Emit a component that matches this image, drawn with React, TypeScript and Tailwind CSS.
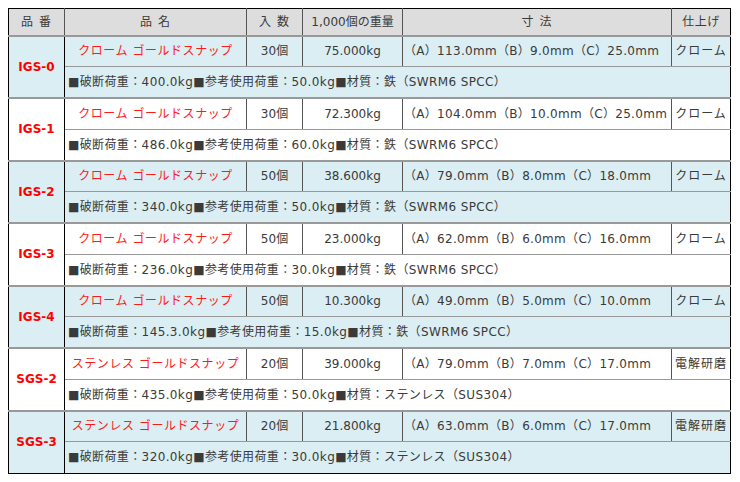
import React from "react";

type Row = {
  code: string;
  name: string;
  qty: string;
  weight: string;
  dim: string;
  fin: string;
  spec: string;
  blue: boolean;
};

const rows: Row[] = [
  { code: "IGS-0", name: "クローム ゴールドスナップ", qty: "30個", weight: "75.000kg", dim: "（A）113.0mm（B）9.0mm（C）25.0mm", fin: "クローム", spec: "■破断荷重：400.0kg■参考使用荷重：50.0kg■材質：鉄（SWRM6 SPCC）", blue: true },
  { code: "IGS-1", name: "クローム ゴールドスナップ", qty: "30個", weight: "72.300kg", dim: "（A）104.0mm（B）10.0mm（C）25.0mm", fin: "クローム", spec: "■破断荷重：486.0kg■参考使用荷重：60.0kg■材質：鉄（SWRM6 SPCC）", blue: false },
  { code: "IGS-2", name: "クローム ゴールドスナップ", qty: "50個", weight: "38.600kg", dim: "（A）79.0mm（B）8.0mm（C）18.0mm", fin: "クローム", spec: "■破断荷重：340.0kg■参考使用荷重：50.0kg■材質：鉄（SWRM6 SPCC）", blue: true },
  { code: "IGS-3", name: "クローム ゴールドスナップ", qty: "50個", weight: "23.000kg", dim: "（A）62.0mm（B）6.0mm（C）16.0mm", fin: "クローム", spec: "■破断荷重：236.0kg■参考使用荷重：30.0kg■材質：鉄（SWRM6 SPCC）", blue: false },
  { code: "IGS-4", name: "クローム ゴールドスナップ", qty: "50個", weight: "10.300kg", dim: "（A）49.0mm（B）5.0mm（C）10.0mm", fin: "クローム", spec: "■破断荷重：145.3.0kg■参考使用荷重：15.0kg■材質：鉄（SWRM6 SPCC）", blue: true },
  { code: "SGS-2", name: "ステンレス ゴールドスナップ", qty: "20個", weight: "39.000kg", dim: "（A）79.0mm（B）7.0mm（C）17.0mm", fin: "電解研磨", spec: "■破断荷重：435.0kg■参考使用荷重：50.0kg■材質：ステンレス（SUS304）", blue: false },
  { code: "SGS-3", name: "ステンレス ゴールドスナップ", qty: "20個", weight: "21.800kg", dim: "（A）63.0mm（B）6.0mm（C）17.0mm", fin: "電解研磨", spec: "■破断荷重：320.0kg■参考使用荷重：30.0kg■材質：ステンレス（SUS304）", blue: true },
];

export default function App() {
  return (
    <div
      className="bg-white w-[740px] h-[482px] pl-[8px] pt-[8px] text-[12px] text-[#3a3a3a]"
      style={{ fontFamily: '"DejaVu Sans", "Noto Sans CJK JP", sans-serif' }}
    >
      <table className="table-fixed border-collapse border border-black w-[722px]">
        <colgroup>
          <col className="w-[56px]" />
          <col className="w-[182px]" />
          <col className="w-[56px]" />
          <col className="w-[100px]" />
          <col className="w-[269px]" />
          <col className="w-[59px]" />
        </colgroup>
        <thead>
          <tr className="h-[27px] bg-[#dddddd]">
            <th className="font-normal text-center border-r border-[#555] border-b-2 border-b-[#999] p-0 tracking-[1px]">品 番</th>
            <th className="font-normal text-center border-r border-[#555] border-b-2 border-b-[#999] p-0 tracking-[1px]">品 名</th>
            <th className="font-normal text-center border-r border-[#555] border-b-2 border-b-[#999] p-0 tracking-[1px]">入 数</th>
            <th className="font-normal text-center border-r border-[#555] border-b-2 border-b-[#999] p-0">1,000個の重量</th>
            <th className="font-normal text-center border-r border-[#555] border-b-2 border-b-[#999] p-0 tracking-[1px]">寸 法</th>
            <th className="font-normal text-center border-b-2 border-b-[#999] p-0 tracking-[0.5px]">仕上げ</th>
          </tr>
        </thead>
        <tbody>
          {rows.map((r, i) => {
            const bg = r.blue ? "bg-[#daeef3]" : "bg-white";
            const last = i === rows.length - 1;
            const bottom = last ? "" : "border-b-2 border-b-[#999]";
            return (
              <React.Fragment key={r.code}>
                <tr className={`h-[31px] ${bg}`}>
                  <td
                    rowSpan={2}
                    className={`text-center align-middle font-bold text-[#ff0000] border-r border-black p-0 ${bottom}`}
                  >
                    {r.code}
                  </td>
                  <td className="text-center text-[#ff1a1a] border-r border-[#555] border-b border-b-[#999] p-0 whitespace-nowrap tracking-[0.55px]">
                    {r.name}
                  </td>
                  <td className="text-center border-r border-[#555] border-b border-b-[#999] p-0">{r.qty}</td>
                  <td className="text-center border-r border-[#555] border-b border-b-[#999] p-0">{r.weight}</td>
                  <td className="text-left pl-[1px] border-r border-[#555] border-b border-b-[#999] p-0 whitespace-nowrap overflow-visible tracking-[0.3px]">
                    {r.dim}
                  </td>
                  <td className="text-center border-b border-b-[#999] p-0 whitespace-nowrap tracking-[1px]">{r.fin}</td>
                </tr>
                <tr className={`h-[31.5px] ${bg}`}>
                  <td colSpan={5} className={`text-left pl-[3px] p-0 whitespace-nowrap tracking-[0.38px] ${bottom}`}>
                    {r.spec}
                  </td>
                </tr>
              </React.Fragment>
            );
          })}
        </tbody>
      </table>
    </div>
  );
}
